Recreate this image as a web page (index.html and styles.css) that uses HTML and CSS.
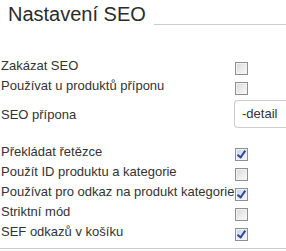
FILE: index.html
```html
<!DOCTYPE html>
<html lang="cs">
<head>
  <meta charset="UTF-8">
  <title>Nastavení SEO</title>
  <link rel="stylesheet" href="styles.css">
</head>
<body>
  <div class="seo-box">
    <h2 class="legend">Nastavení SEO</h2>

    <div class="rows">
      <label class="row">
        <span class="name">Zakázat SEO</span>
        <span class="chk"></span>
      </label>
      <label class="row">
        <span class="name">Používat u produktů příponu</span>
        <span class="chk"></span>
      </label>
      <label class="row row-input">
        <span class="name">SEO přípona</span>
        <span class="txt">-detail</span>
      </label>
      <label class="row">
        <span class="name">Překládat řetězce</span>
        <span class="chk on"></span>
      </label>
      <label class="row">
        <span class="name">Použít ID produktu a kategorie</span>
        <span class="chk"></span>
      </label>
      <label class="row">
        <span class="name">Používat pro odkaz na produkt kategorie</span>
        <span class="chk on"></span>
      </label>
      <label class="row">
        <span class="name">Striktní mód</span>
        <span class="chk"></span>
      </label>
      <label class="row">
        <span class="name">SEF odkazů v košíku</span>
        <span class="chk on"></span>
      </label>
    </div>
  </div>
</body>
</html>
```

FILE: styles.css
```css
body {
  margin: 0;
  background: #fff;
  font-family: 'Liberation Sans', Arial, sans-serif;
  color: #333;
  overflow: hidden;
}

.seo-box {
  width: 286px;
  height: 248px;
  border-bottom: 1px solid #ccc;
}

.legend {
  display: flex;
  align-items: flex-end;
  gap: 8px;
  margin: 0;
  padding: 4px 0 0 8px;
  font-size: 20px;
  font-weight: normal;
  line-height: 20px;
  color: #2b2b2b;
}

.legend::after {
  content: "";
  flex: 1;
  border-bottom: 1px solid #ccc;
  margin-bottom: -1px;
}

.rows {
  padding-top: 31px;
}

.row {
  display: grid;
  grid-template-columns: 235px 1fr;
  align-items: center;
  height: 20px;
  font-size: 13px;
}

.row-input {
  height: 28px;
  padding: 5px 0 13px;
}

.name {
  white-space: nowrap;
  padding-left: 1px;
}

.chk {
  width: 11px;
  height: 11px;
  border: 1px solid #8e8f8f;
  background: linear-gradient(135deg, #d8d8d8, #fbfbfb);
  box-shadow: inset 0 0 0 1px #f2f2f2;
  position: relative;
  margin-top: 6px;
}

.chk.on {
  background: linear-gradient(135deg, #c9d3e6, #f4f6fb);
}

.chk.on::after {
  content: "";
  position: absolute;
  left: 3px;
  top: 0;
  width: 3px;
  height: 7px;
  border: solid #2e45a0;
  border-width: 0 2px 2px 0;
  transform: rotate(35deg);
}

.txt {
  margin-left: -1px;
  height: 26px;
  line-height: 26px;
  border: 1px solid #ccc;
  border-right: none;
  border-radius: 4px 0 0 4px;
  padding-left: 7px;
  font-size: 13px;
  color: #333;
}
```
